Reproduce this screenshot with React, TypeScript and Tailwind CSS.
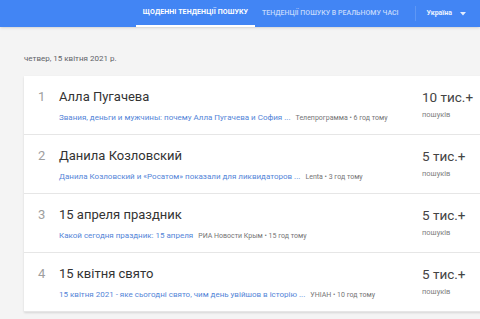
const rows = [
  {
    rank: 1,
    title: "Алла Пугачева",
    link: "Звания, деньги и мужчины: почему Алла Пугачева и София ...",
    source: "Телепрограмма • 6 год тому",
    count: "10 тис.+",
  },
  {
    rank: 2,
    title: "Данила Козловский",
    link: "Данила Козловский и «Росатом» показали для ликвидаторов ...",
    source: "Lenta • 3 год тому",
    count: "5 тис.+",
  },
  {
    rank: 3,
    title: "15 апреля праздник",
    link: "Какой сегодня праздник: 15 апреля",
    source: "РИА Новости Крым • 15 год тому",
    count: "5 тис.+",
  },
  {
    rank: 4,
    title: "15 квітня свято",
    link: "15 квітня 2021 - яке сьогодні свято, чим день увійшов в історію ...",
    source: "УНІАН • 10 год тому",
    count: "5 тис.+",
  },
];

export default function App() {
  return (
    <div className="w-[480px] h-[319px] overflow-hidden bg-[#f4f4f4] font-['Roboto',sans-serif]">
      {/* Header */}
      <div className="h-[27px] bg-[#4285f4] flex items-stretch shadow-sm">
        <div className="w-[136px]" />
        <div className="px-[8px] w-[119px] flex items-center justify-center border-b-2 border-white">
          <span className="text-[7px] font-bold text-white tracking-[0.1px] whitespace-nowrap">
            ЩОДЕННІ ТЕНДЕНЦІЇ ПОШУКУ
          </span>
        </div>
        <div className="pl-[7px] flex items-center">
          <span className="text-[7px] font-medium text-white/70 whitespace-nowrap">
            ТЕНДЕНЦІЇ ПОШУКУ В РЕАЛЬНОМУ ЧАСІ
          </span>
        </div>
        <div className="ml-[16px] my-[6px] w-px bg-white/15" />
        <div className="ml-[11px] flex items-center gap-[8px]">
          <span className="text-[7px] font-bold text-white/90">Україна</span>
          <svg width="6" height="4" viewBox="0 0 6 4">
            <path d="M0 0h6L3 3.5z" fill="rgba(255,255,255,0.85)" />
          </svg>
        </div>
      </div>

      {/* Content */}
      <div className="pl-[24px]">
        <div className="mt-[27px] h-[10px] leading-[10px] text-[8px] text-[#5f6368]">
          четвер, 15 квітня 2021 р.
        </div>
        <div className="mt-[12px] w-[480px] bg-white shadow-[0_1px_2px_rgba(0,0,0,0.12)]">
          {rows.map((r) => (
            <div
              key={r.rank}
              className="h-[59px] flex border-b border-[#e6e6e6] pl-[14px]"
            >
              <div className="w-[21px] pt-[13px] text-[13px] leading-[16px] text-[#9e9e9e]">
                {r.rank}
              </div>
              <div className="flex-1 pt-[13px] min-w-0">
                <div className="text-[13px] leading-[16px] text-[#333333]">
                  {r.title}
                </div>
                <div className="mt-[4px] leading-[12px] whitespace-nowrap">
                  <span className="text-[8px] text-[#5485d8]">{r.link}</span>
                  <span className="ml-[5px] text-[7px] text-[#757575]">
                    {r.source}
                  </span>
                </div>
              </div>
              <div className="w-[82px] shrink-0 pt-[13px]">
                <div className="text-[13.5px] leading-[16px] text-[#444444]">
                  {r.count}
                </div>
                <div className="mt-[4px] text-[7.5px] leading-[12px] text-[#808080]">
                  пошуків
                </div>
              </div>
            </div>
          ))}
        </div>
      </div>
    </div>
  );
}
